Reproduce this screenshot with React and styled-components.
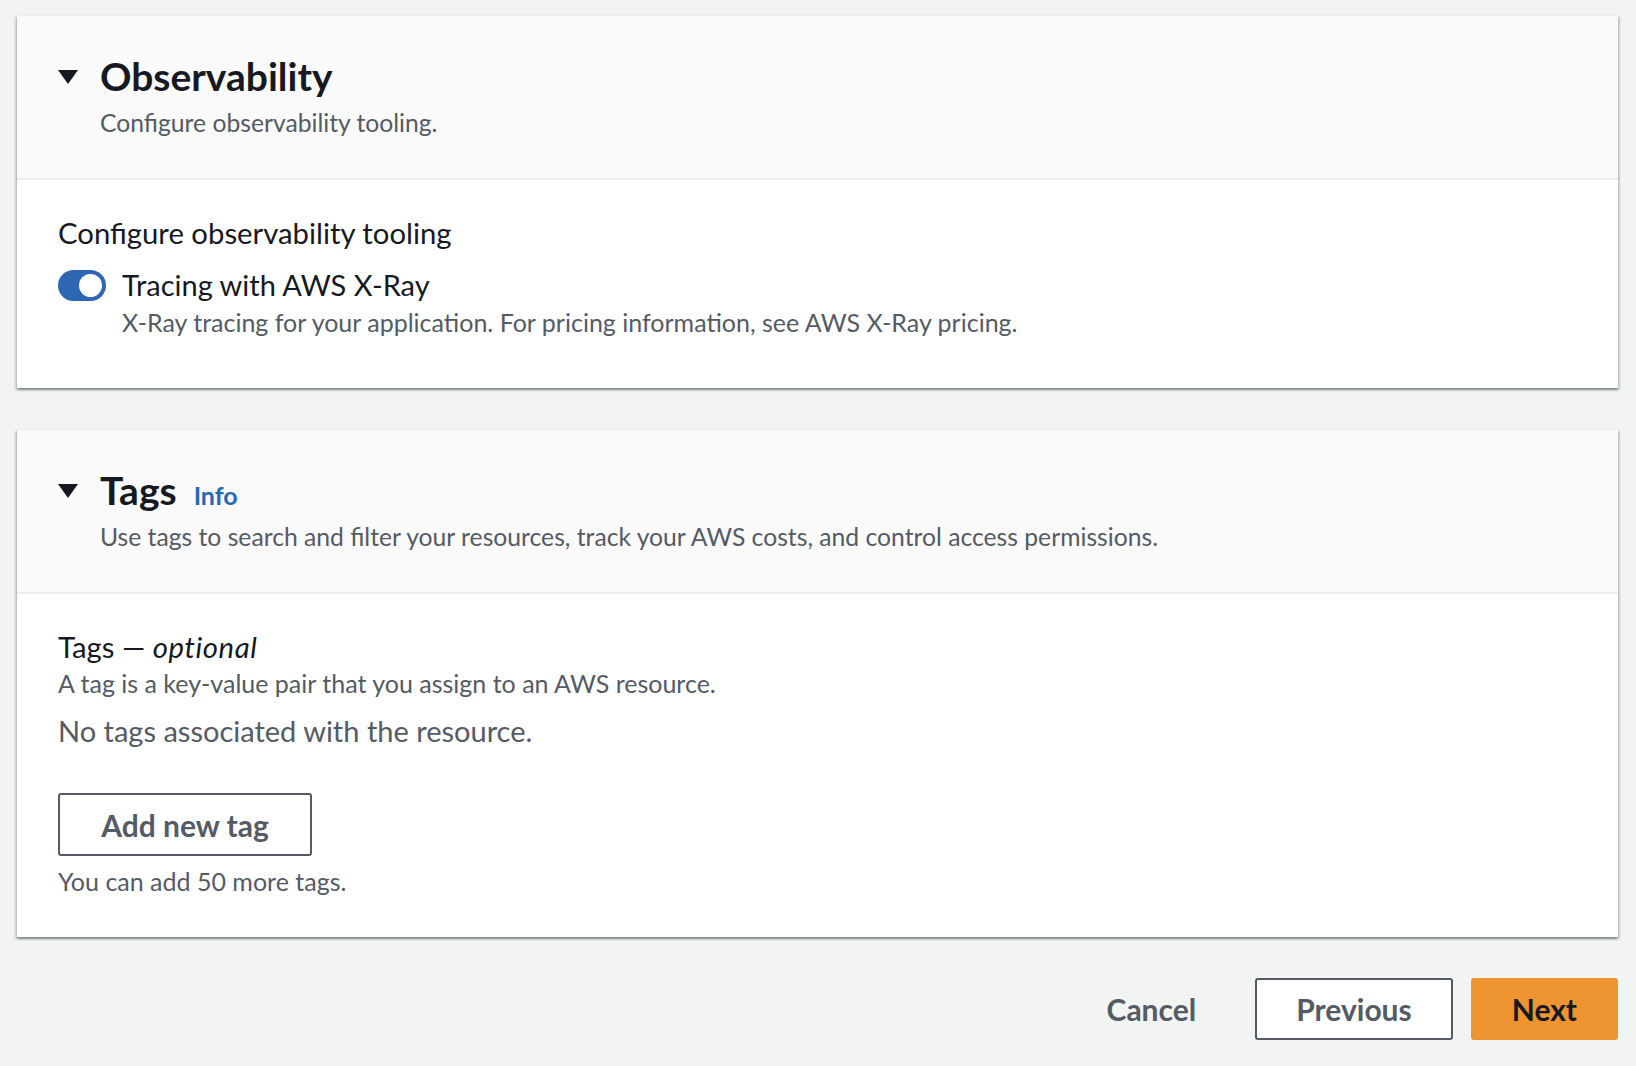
import React from "react";
import styled, { createGlobalStyle } from "styled-components";

const GlobalStyle = createGlobalStyle`
  html, body {
    margin: 0;
    padding: 0;
    background: #f2f3f3;
  }
  body {
    font-family: Lato, "Open Sans", "Liberation Sans", sans-serif;
    color: #16191f;
    -webkit-font-smoothing: antialiased;
  }
  * { box-sizing: border-box; }
`;

const Page = styled.div`
  padding: 15px 18px 25px 17px;
  display: flex;
  flex-direction: column;
  gap: 41px;
`;

const Panel = styled.section`
  background: #ffffff;
  border-top: 1px solid #eaeded;
  box-shadow: 0 2px 2px 0 rgba(0, 28, 36, 0.3), 2px 2px 2px 0 rgba(0, 28, 36, 0.15),
    -2px 2px 2px 0 rgba(0, 28, 36, 0.15);
`;

const PanelHeader = styled.header`
  background: #fafafa;
  border-bottom: 2px solid #eaeded;
  padding: 39px 41px 37px 41px;
  display: grid;
  grid-template-columns: 42px 1fr;
`;

const Caret = styled.svg`
  width: 20px;
  height: 14px;
  margin-top: 15px;
  display: block;
`;

const HeaderText = styled.div`
  display: flex;
  flex-direction: column;
`;

const TitleRow = styled.div`
  display: flex;
  align-items: baseline;
  gap: 17px;
`;

const Title = styled.h2`
  margin: 0;
  font-size: 39px;
  line-height: 42px;
  font-weight: 700;
  color: #16191f;
`;

const InfoLink = styled.a`
  font-size: 25px;
  font-weight: 700;
  color: #2a68b3;
  text-decoration: none;
`;

const Subtitle = styled.p`
  margin: 8px 0 0;
  font-size: 24.7px;
  line-height: 36px;
  color: #545b64;
`;

const PanelBody = styled.div`
  padding: 35px 41px ${(p) => p.$bottom || 38}px 41px;
  display: flex;
  flex-direction: column;
`;

const FieldLabel = styled.div`
  font-size: 29.3px;
  line-height: 36px;
  color: #16191f;
  em {
    font-style: italic;
    letter-spacing: 0.6px;
  }
`;

const FieldDescription = styled.div`
  font-size: 25px;
  line-height: 36px;
  color: #545b64;
`;

const ToggleRow = styled.div`
  margin-top: 16px;
  display: grid;
  grid-template-columns: 48px 1fr;
  column-gap: 16px;
  align-items: center;
`;

const Toggle = styled.span`
  width: 48px;
  height: 31px;
  border-radius: 16px;
  background: #2d67b2;
  position: relative;
  display: block;
  &::after {
    content: "";
    position: absolute;
    right: 4px;
    top: 4px;
    width: 23px;
    height: 23px;
    border-radius: 50%;
    background: #ffffff;
  }
`;

const ToggleLabel = styled.div`
  font-size: 29px;
  line-height: 36px;
  color: #16191f;
`;

const ToggleDescription = styled(FieldDescription)`
  grid-column: 2;
  margin-top: 1px;
`;

const EmptyText = styled.div`
  margin-top: 11px;
  font-size: 29px;
  line-height: 38px;
  color: #545b64;
`;

const Button = styled.button`
  font-family: inherit;
  font-size: 30px;
  font-weight: 700;
  height: 62px;
  padding: 0 39px;
  border-radius: 3px;
  cursor: pointer;
  border: 2px solid ${(p) => (p.$variant === "link" ? "transparent" : p.$variant === "primary" ? "#ee9532" : "#545b64")};
  background: ${(p) => (p.$variant === "primary" ? "#ee9532" : p.$variant === "link" ? "transparent" : "#ffffff")};
  color: ${(p) => (p.$variant === "primary" ? "#16191f" : "#545b64")};
`;

const AddButtonWrap = styled.div`
  margin-top: 43px;
  display: flex;
`;

const AddButton = styled(Button)`
  height: 63px;
  padding: 0 40px 0 40px;
  min-width: 254px;
`;

const Hint = styled(FieldDescription)`
  margin-top: 7px;
`;

const Footer = styled.div`
  display: flex;
  justify-content: flex-end;
  gap: 18px;
`;

function SectionHeader({ title, info, description }) {
  return (
    <PanelHeader>
      <Caret viewBox="0 0 20 14" aria-hidden="true">
        <path d="M0 0 H20 L10 14 Z" fill="#16191f" />
      </Caret>
      <HeaderText>
        <TitleRow>
          <Title>{title}</Title>
          {info && <InfoLink href="#">Info</InfoLink>}
        </TitleRow>
        <Subtitle>{description}</Subtitle>
      </HeaderText>
    </PanelHeader>
  );
}

export default function App() {
  return (
    <>
      <GlobalStyle />
      <Page>
        <Panel>
          <SectionHeader title="Observability" description="Configure observability tooling." />
          <PanelBody $bottom={48}>
            <FieldLabel>Configure observability tooling</FieldLabel>
            <ToggleRow>
              <Toggle role="switch" aria-checked="true" />
              <ToggleLabel>Tracing with AWS X-Ray</ToggleLabel>
              <ToggleDescription>
                X-Ray tracing for your application. For pricing information, see AWS X-Ray pricing.
              </ToggleDescription>
            </ToggleRow>
          </PanelBody>
        </Panel>

        <Panel>
          <SectionHeader
            title="Tags"
            info
            description="Use tags to search and filter your resources, track your AWS costs, and control access permissions."
          />
          <PanelBody>
            <FieldLabel>
              Tags — <em>optional</em>
            </FieldLabel>
            <FieldDescription>A tag is a key-value pair that you assign to an AWS resource.</FieldDescription>
            <EmptyText>No tags associated with the resource.</EmptyText>
            <AddButtonWrap>
              <AddButton>Add new tag</AddButton>
            </AddButtonWrap>
            <Hint>You can add 50 more tags.</Hint>
          </PanelBody>
        </Panel>

        <Footer>
          <Button $variant="link">Cancel</Button>
          <Button>Previous</Button>
          <Button $variant="primary">Next</Button>
        </Footer>
      </Page>
    </>
  );
}
